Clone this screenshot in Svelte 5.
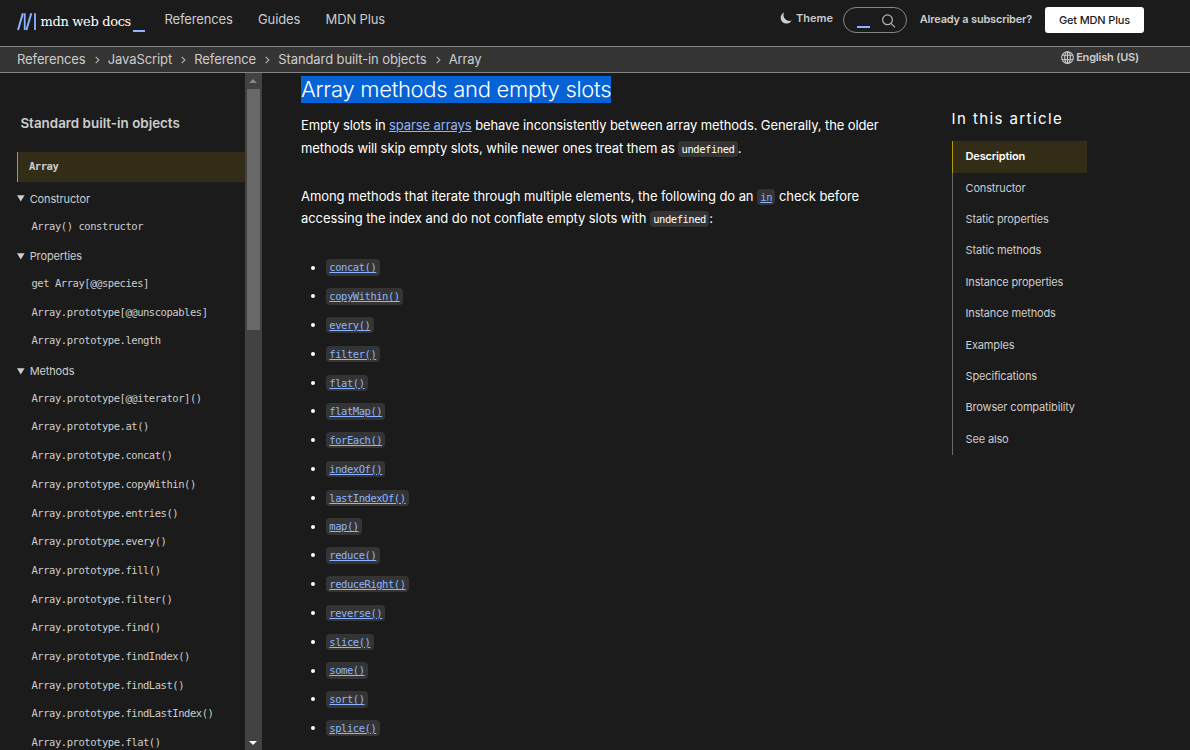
<script>
  const crumbs = ['References', 'JavaScript', 'Reference', 'Standard built-in objects', 'Array'];
  const groups = [
    { title: 'Constructor', items: ['Array() constructor'] },
    { title: 'Properties', items: ['get Array[@@species]', 'Array.prototype[@@unscopables]', 'Array.prototype.length'] },
    {
      title: 'Methods',
      items: [
        'Array.prototype[@@iterator]()', 'Array.prototype.at()', 'Array.prototype.concat()',
        'Array.prototype.copyWithin()', 'Array.prototype.entries()', 'Array.prototype.every()',
        'Array.prototype.fill()', 'Array.prototype.filter()', 'Array.prototype.find()',
        'Array.prototype.findIndex()', 'Array.prototype.findLast()', 'Array.prototype.findLastIndex()',
        'Array.prototype.flat()'
      ]
    }
  ];
  const methods = ['concat', 'copyWithin', 'every', 'filter', 'flat', 'flatMap', 'forEach', 'indexOf',
    'lastIndexOf', 'map', 'reduce', 'reduceRight', 'reverse', 'slice', 'some', 'sort', 'splice'];
  const toc = ['Description', 'Constructor', 'Static properties', 'Static methods', 'Instance properties',
    'Instance methods', 'Examples', 'Specifications', 'Browser compatibility', 'See also'];
</script>

<div class="page">
  <header>
    <a class="logo" href="#top" aria-label="MDN">
      <svg width="20" height="18" viewBox="0 0 20 18" fill="none" stroke="#8cb4ff">
        <path d="M1 17 5.9.3M9.4 17 14.3.3" stroke-width="2" />
        <path d="M7.7.3V17M18 .3V17" stroke-width="1.8" />
      </svg>
      <span class="word">mdn web docs</span><span class="cursor"></span>
    </a>
    <nav class="main-nav">
      <a href="#r">References</a><a href="#g">Guides</a><a href="#p">MDN Plus</a>
    </nav>
    <button class="theme">
      <svg width="12" height="12" viewBox="0 0 12 12"><path d="M4.2.3A5.9 5.9 0 1 0 11.7 8.6 6 6 0 0 1 4.2.3Z" fill="#cdcdcd" /></svg>
      <span>Theme</span>
    </button>
    <div class="search">
      <span class="caret"></span>
      <svg width="14" height="14" viewBox="0 0 14 14" fill="none" stroke="#b3b3b3" stroke-width="1.2"><circle cx="5.5" cy="5.8" r="4.9" /><path d="m9 9.3 4 4" /></svg>
    </div>
    <a class="login" href="#l">Already a subscriber?</a>
    <a class="plus" href="#s">Get MDN Plus</a>
  </header>

  <div class="crumbbar">
    <ol>
      {#each crumbs as c, i}
        <li>
          {#if i}<svg width="5" height="8" viewBox="0 0 5 8" fill="none" stroke="#b3b3b3" stroke-width="1.1"><path d="m.7.8 3.2 3.2L.7 7.2" /></svg>{/if}<a href="#c">{c}</a>
        </li>
      {/each}
    </ol>
    <button class="lang">
      <svg width="13" height="13" viewBox="0 0 13 13" fill="none" stroke="#cdcdcd" stroke-width="1.1"><circle cx="6.5" cy="6.5" r="5.8" /><ellipse cx="6.5" cy="6.5" rx="2.8" ry="5.8" /><path d="M6.5.7v11.6M1.3 4.3h10.4M1.3 8.7h10.4" /></svg>
      <span>English (US)</span>
    </button>
  </div>

  <div class="body">
    <aside>
      <div class="tree">
        <h2>Standard built-in objects</h2>
        <div class="current"><code>Array</code></div>
        {#each groups as g}
          <div class="summary"><svg width="8" height="7" viewBox="0 0 8 7"><path d="M0 .3h7.6L3.8 6.6Z" fill="#cdcdcd" /></svg><span>{g.title}</span></div>
          {#each g.items as item}<div class="item"><code>{item}</code></div>{/each}
        {/each}
      </div>
      <div class="scroll">
        <svg class="up" width="8" height="4" viewBox="0 0 8 4"><path d="M0 4 4 0l4 4Z" fill="#868686" /></svg>
        <div class="thumb"></div>
        <svg class="down" width="8" height="4" viewBox="0 0 8 4"><path d="M0 0h8L4 4Z" fill="#fff" /></svg>
      </div>
    </aside>

    <main>
      <h3><span>Array methods and empty slots</span></h3>
      <p>Empty slots in <a href="#sparse">sparse arrays</a> behave inconsistently between array methods. Generally, the older<br />methods will skip empty slots, while newer ones treat them as <code>undefined</code>.</p>
      <p class="iterating">Among methods that iterate through multiple elements, the following do an <code><a href="#in">in</a></code> check before<br />accessing the index and do not conflate empty slots with <code>undefined</code>:</p>
      <ul>
        {#each methods as m}<li><code><a href="#m">{m}()</a></code></li>{/each}
      </ul>
    </main>

    <nav class="toc">
      <h2>In this article</h2>
      <ul>
        {#each toc as t, i}<li class:active={i === 0}><a href="#t">{t}</a></li>{/each}
      </ul>
    </nav>
  </div>
</div>

<style>
  :global(body) { margin: 0; background: #1b1b1b; }
  .page { width: 1190px; height: 750px; overflow: hidden; display: flex; flex-direction: column; background: #1b1b1b; color: #fff; font-family: Inter, sans-serif; font-size: 13px; }
  a { color: inherit; text-decoration: none; }
  h2, h3, p, ul, ol { margin: 0; padding: 0; font-weight: 400; }
  ol, .toc ul { list-style: none; }
  button { background: none; border: 0; padding: 0; color: inherit; font: inherit; display: flex; align-items: center; }
  svg { display: block; flex: none; }
  code { font-family: "DejaVu Sans Mono", monospace; font-size: 10.5px; letter-spacing: -.453px; }

  header { height: 46px; flex: none; display: flex; align-items: flex-start; color: #cdcdcd; border-bottom: 1px solid #858585; }
  .logo { display: flex; width: 128px; margin: 13px 19.5px 0 17px; }
  .word { margin-left: 3.5px; color: #fff; font-family: "DejaVu Serif", serif; font-size: 13px; line-height: 17px; letter-spacing: -.34px; width: 92.5px; white-space: nowrap; }
  .cursor { width: 12px; height: 2px; background: #8cb4ff; margin-top: 17px; }
  .main-nav { display: flex; gap: 25.4px; font-size: 13px; letter-spacing: -.14px; line-height: 16px; margin-top: 11.4px; flex: 1; }
  .theme { font-size: 11px; font-weight: 600; line-height: 14px; gap: 4px; margin-top: 11px; }
  .search { box-sizing: border-box; width: 64px; height: 26px; border: 1px solid #858585; border-radius: 13px; margin: 7px 13px 0 9.8px; display: flex; }
  .caret { width: 13px; height: 2px; background: #8cb4ff; margin: 18px 12px 0 13px; }
  .search svg { margin-top: 6px; }
  .login { font-size: 11px; letter-spacing: -.2px; font-weight: 600; line-height: 14px; margin: 12px 13px 0 0; }
  .plus { width: 99px; height: 26px; background: #fff; color: #1b1b1b; border-radius: 3px; margin: 7px 46px 0 0; text-align: center; font-size: 11px; letter-spacing: -.16px; font-weight: 500; line-height: 26px; }

  .crumbbar { height: 25px; flex: none; display: flex; justify-content: space-between; background: #343434; border-bottom: 1px solid #858585; padding: 0 51px 0 17px; color: #cdcdcd; }
  ol { display: flex; font-size: 13px; letter-spacing: -.1px; line-height: 25px; }
  li { white-space: nowrap; }
  ol li { display: flex; align-items: center; }
  ol svg { margin: 1px 8px 0 9.2px; }
  .lang { font-size: 11px; letter-spacing: -.18px; font-weight: 600; line-height: 14px; gap: 2px; height: 20px; }

  .body { flex: 1; display: flex; min-height: 0; }
  aside { width: 262px; display: flex; flex: none; }
  .tree { width: 228px; padding-left: 17px; color: #cdcdcd; overflow: hidden; }
  .tree h2 { font-size: 13.4px; font-weight: 600; line-height: 18px; margin: 41px 0 20px 3.4px; }
  .current { box-sizing: border-box; height: 30px; border-left: 1px solid #b59f00; background: #332d18; padding-left: 11px; line-height: 29px; font-weight: 700; margin-bottom: .8px; }
  .tree code { display: block; white-space: pre; }
  .summary { height: 28.75px; display: flex; align-items: center; gap: 4.7px; font-size: 11px; letter-spacing: -.13px; }
  .summary span { padding-top: 3.4px; }
  .summary svg { margin-top: 3.4px; }
  .item { height: 28.7px; padding-left: 14.5px; line-height: 28.7px; }
  .scroll { width: 17px; background: #424242; display: flex; flex-direction: column; align-items: center; }
  .up { margin: 6px 1px 6px 0; }
  .thumb { width: 13px; height: 241px; background: #686868; }
  .down { margin: auto 1px 5px 0; }

  main { width: 651px; padding-left: 39px; box-sizing: content-box; flex: none; }
  h3 { font-size: 22px; letter-spacing: -.29px; font-weight: 300; line-height: 27px; margin: 3px 0 11.3px; }
  h3 span { background: #0563d5; display: inline-block; height: 27px; }
  p { line-height: 22.5px; letter-spacing: -.1px; margin-bottom: 25.4px; white-space: nowrap; }
  .iterating { letter-spacing: -.074px; }
  main code { background: #343434; border-radius: 4px; padding: 2px 3.3px; line-height: 1; }
  main a { color: #8cb4ff; text-decoration: underline; }
  main ul { list-style: none; margin-top: -1.9px; }
  main ul li { height: 28.79px; line-height: 28.79px; display: flex; align-items: center; padding-left: 10px; }
  main ul li::before { content: ''; width: 4px; height: 4px; border-radius: 50%; background: #fff; margin-right: 11px; }
  main ul code { line-height: 12.4px; }

  .toc { width: 135px; }
  .toc h2 { font-size: 15px; letter-spacing: 1.4px; line-height: 20px; margin: 36px 0 12.2px -.4px; white-space: nowrap; }
  .toc ul { color: #cdcdcd; font-size: 11px; letter-spacing: -.15px; }
  .toc li { height: 31.42px; line-height: 30px; border-left: 1px solid #696969; padding-left: 12.5px; }
  .toc .active { background: #332d18; border-color: #b59f00; color: #fff; font-weight: 600; }
</style>
